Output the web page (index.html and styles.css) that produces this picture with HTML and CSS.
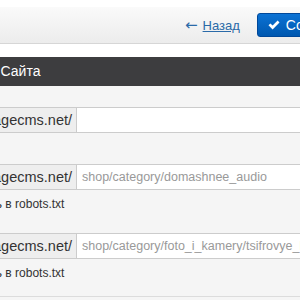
FILE: index.html
```html
<!DOCTYPE html>
<html lang="ru">
<head>
    <meta charset="UTF-8">
    <meta name="viewport" content="width=device-width, initial-scale=1.0">
    <link rel="stylesheet" href="styles.css">
    <title>Настройки сайта</title>
</head>
<body>
    <div class="toolbar">
        <div class="toolbar-actions">
            <a href="#" class="back-link"><span class="arrow">&larr;</span><span class="back-text">Назад</span></a>
            <button class="btn-save">
                <svg class="icon-ok" width="12" height="10" viewBox="0 0 12 10">
                    <path d="M0.5 5.3 L2.4 3.4 L4.6 5.6 L9.6 0.6 L11.5 2.5 L4.6 9.4 Z" fill="#fff"/>
                </svg>
                Сохранить
            </button>
        </div>
    </div>

    <div class="page">
        <div class="section-title">Настройки Сайта</div>

        <div class="form">
            <div class="form-row first">
                <div class="url-group">
                    <span class="url-addon"><span>http://www.imagecms.net/</span></span>
                    <input type="text" class="url-input" value="">
                </div>
            </div>

            <div class="form-row">
                <div class="url-group">
                    <span class="url-addon"><span>http://www.imagecms.net/</span></span>
                    <input type="text" class="url-input" value="shop/category/domashnee_audio">
                </div>
                <div class="help">Добавить в robots.txt</div>
            </div>

            <div class="form-row last">
                <div class="url-group">
                    <span class="url-addon"><span>http://www.imagecms.net/</span></span>
                    <input type="text" class="url-input" value="shop/category/foto_i_kamery/tsifrovye_kamery">
                </div>
                <div class="help">Добавить в robots.txt</div>
            </div>
        </div>
    </div>
</body>
</html>
```

FILE: styles.css
```css
body {
    font-family: "Liberation Sans", Arial, sans-serif;
    margin: 0;
    padding: 0;
    background-color: #fff;
    overflow: hidden;
}

.toolbar {
    margin-top: 7px;
    height: 36px;
    background: linear-gradient(#fafafa, #ececec);
    border-bottom: 1px solid #d6d6d6;
}

.toolbar-actions {
    display: flex;
    align-items: center;
    height: 100%;
    padding-left: 185px;
    white-space: nowrap;
}

.back-link {
    color: #2a6aa8;
    font-size: 13px;
    text-decoration: none;
}

.back-link .arrow {
    font-family: "DejaVu Sans", sans-serif;
    font-size: 15px;
    margin-right: 5px;
}

.back-link .back-text {
    text-decoration: underline;
}

.btn-save {
    display: flex;
    align-items: center;
    gap: 6px;
    margin-left: 17px;
    height: 24px;
    padding: 0 12px 0 10px;
    border: 1px solid #00489a;
    border-radius: 3px;
    background: linear-gradient(#0b72d4, #0058b0);
    color: #fff;
    font-family: "Liberation Sans", Arial, sans-serif;
    font-size: 14px;
    flex-shrink: 0;
}

.page {
    margin-top: 13px;
    margin-left: -73px;
    width: 500px;
}

.section-title {
    height: 29px;
    line-height: 29px;
    background-color: #3d3d3f;
    color: #fff;
    font-size: 14px;
    padding-left: 1px;
}

.form {
    background-color: #f5f5f5;
    padding-top: 21px;
    height: 300px;
}

.form-row {
    margin-bottom: 19px;
}

.form-row.first {
    margin-bottom: 31px;
}

.form-row.last {
    margin-bottom: 0;
    padding-bottom: 13px;
    border-bottom: 1px solid #dcdcdc;
}

.url-group {
    display: flex;
    height: 26px;
}

.url-addon {
    box-sizing: border-box;
    display: flex;
    justify-content: flex-end;
    align-items: center;
    flex-shrink: 0;
    width: 150px;
    padding-right: 4px;
    white-space: nowrap;
    overflow: hidden;
    background-color: #eee;
    border: 1px solid #ccc;
    border-left: none;
    color: #333;
    font-size: 14.5px;
}

.url-addon span {
    flex-shrink: 0;
}

.url-input {
    box-sizing: border-box;
    width: 350px;
    height: 26px;
    margin: 0;
    padding: 0 5px;
    border: 1px solid #ccc;
    border-left: none;
    background-color: #fff;
    color: #999;
    font-family: "Liberation Sans", Arial, sans-serif;
    font-size: 12.5px;
    outline: none;
}

.help {
    margin-top: 4px;
    line-height: 20px;
    padding-left: 22px;
    color: #333;
    font-size: 12px;
}
```
